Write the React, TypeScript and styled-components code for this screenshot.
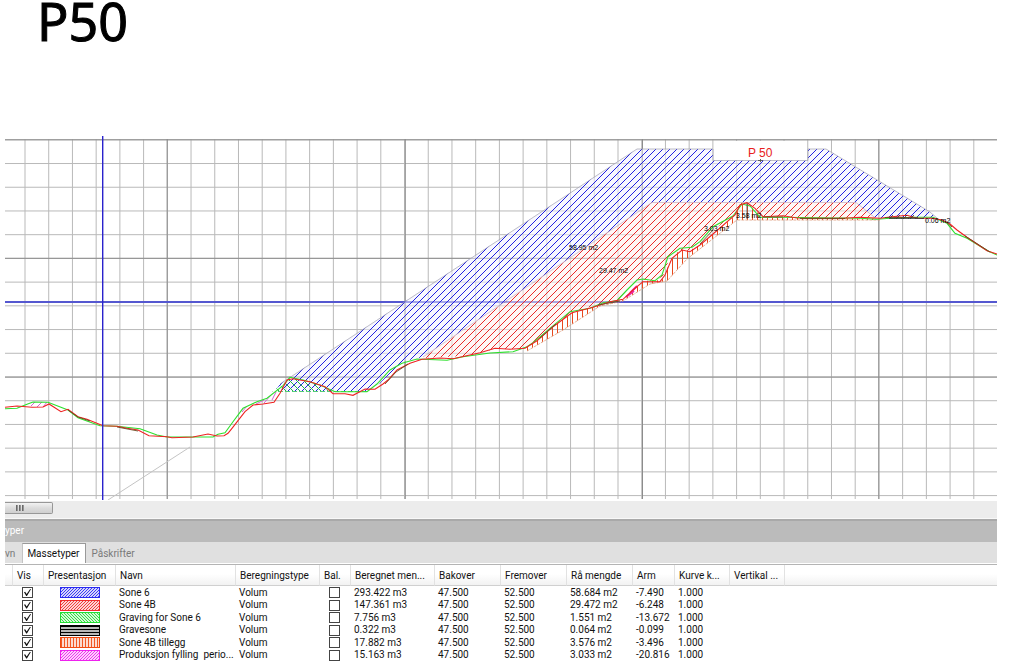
import React from "react";
import styled, { createGlobalStyle, css } from "styled-components";

const GlobalStyle = createGlobalStyle`
  *, *::before, *::after { box-sizing: border-box; }
  body {
    margin: 0;
    background: #fff;
    color: #111;
    font-family: Roboto, "Noto Sans", sans-serif;
    font-size: 10px;
  }
`;

const Page = styled.main`
  display: flex;
  flex-direction: column;
  padding: 0 27px 8px 5px;
`;

const Title = styled.h1`
  margin: 0;
  height: 136px;
  padding-left: 32px;
  font-family: "Noto Sans", "Open Sans", sans-serif;
  font-size: 52px;
  font-weight: 400;
  line-height: 42px;
  color: #000;
  -webkit-text-stroke: 1px #000;
`;

const Section = styled.svg`
  display: block;
  width: 100%;
  height: auto;
`;

const ScrollTrack = styled.div`
  display: flex;
  height: 18px;
  padding: 1px 0 4px;
  margin-top: 1px;
  background: #ececec;
  border-bottom: 1px solid #f8f8f8;
`;

const ScrollThumb = styled.button`
  display: flex;
  align-items: center;
  justify-content: center;
  gap: 1px;
  width: 48px;
  height: 12px;
  padding: 0 18px 0 0;
  border: 1px solid #979797;
  border-left: 0;
  border-radius: 0 2px 2px 0;
  background: linear-gradient(#f2f2f2, #dcdcdc 50%, #cfcfcf);
`;

const Grip = styled.span`
  width: 2px;
  height: 6px;
  background: linear-gradient(90deg, #555, #aaa);
`;

const PanelHeading = styled.h2`
  margin: 0;
  height: 23px;
  border-top: 2px solid #a9a9a9;
  background: #bbb;
  color: #fff;
  font-size: 10px;
  font-weight: 400;
  line-height: 20px;
`;

const TabStrip = styled.div`
  display: flex;
  align-items: stretch;
  height: 22px;
  padding-top: 1px;
  background: #e0e0e0;
  border-bottom: 1px solid #fff;
`;

const Tab = styled.button<{ $active?: boolean; $cut?: boolean }>`
  padding: 0 ${(p) => (p.$cut ? 7 : 5)}px 0 ${(p) => (p.$cut ? 0 : 5)}px;
  border: 0;
  background: transparent;
  color: #7a7a7a;
  font: inherit;
  line-height: 19px;
  ${(p) =>
    p.$active &&
    css`
      padding: 0 6px 0 4px;
      border: 1px solid #999;
      border-bottom: 0;
      border-left-color: #c4c4c4;
      background: #fff;
      color: #111;
    `}
`;

const Table = styled.table`
  width: 100%;
  table-layout: fixed;
  border-collapse: separate;
  border-spacing: 0;
  border-top: 1px solid #b4b4b4;
`;

const HeadCell = styled.th<{ $pad: number }>`
  height: 21px;
  padding: 1px 0 0 ${(p) => p.$pad}px;
  border-right: 1px solid #e2e2e2;
  border-bottom: 1px solid #d0d0d0;
  background: linear-gradient(#fff, #fff 45%, #f2f2f2);
  font-weight: 400;
  text-align: left;
  white-space: nowrap;
  overflow: hidden;
  line-height: 18px;
  &:last-child { border-right: 0; }
`;

const Row = styled.tr`
  height: 13px;
  &:nth-child(even) { height: 12px; }
`;

const Cell = styled.td<{ $pad: number }>`
  height: inherit;
  padding: 0 0 0 ${(p) => p.$pad}px;
  line-height: 12px;
  vertical-align: middle;
  white-space: pre;
  overflow: hidden;
`;

const Check = styled.input`
  appearance: none;
  display: grid;
  place-items: center;
  width: 11px;
  height: 11px;
  margin: 0;
  border: 1px solid #444;
  background: #fff;
  &:checked::before {
    content: "";
    width: 7px;
    height: 7px;
    background: #111;
    clip-path: polygon(0 45%, 16% 40%, 38% 72%, 88% 0, 100% 5%, 42% 100%, 32% 100%);
  }
`;

const Swatch = styled.svg`
  display: block;
  width: 40px;
  height: 11px;
`;

type Hatch = "up" | "down" | "rows" | "bars";

interface MassType {
  id: string;
  color: string;
  hatch: Hatch;
  name: string;
  volume: string;
  area: string;
  arm: string;
}

const massTypes: MassType[] = [
  { id: "s6", color: "#2a2af0", hatch: "up", name: "Sone 6", volume: "293.422 m3", area: "58.684 m2", arm: "-7.490" },
  { id: "s4b", color: "#f02a2a", hatch: "up", name: "Sone 4B", volume: "147.361 m3", area: "29.472 m2", arm: "-6.248" },
  { id: "g6", color: "#22dd33", hatch: "down", name: "Graving for Sone 6", volume: "7.756 m3", area: "1.551 m2", arm: "-13.672" },
  { id: "gs", color: "#000000", hatch: "rows", name: "Gravesone", volume: "0.322 m3", area: "0.064 m2", arm: "-0.099" },
  { id: "s4t", color: "#f04a10", hatch: "bars", name: "Sone 4B tillegg", volume: "17.882 m3", area: "3.576 m2", arm: "-3.496" },
  { id: "pf", color: "#ee22ee", hatch: "up", name: "Produksjon fylling  perio...", volume: "15.163 m3", area: "3.033 m2", arm: "-20.816" },
];

const columns = [
  { label: "", width: 8, pad: 0 },
  { label: "Vis", width: 31, pad: 4 },
  { label: "Presentasjon", width: 72, pad: 4 },
  { label: "Navn", width: 120, pad: 4 },
  { label: "Beregningstype", width: 84, pad: 4 },
  { label: "Bal.", width: 31, pad: 4 },
  { label: "Beregnet men...", width: 84, pad: 4 },
  { label: "Bakover", width: 66, pad: 4 },
  { label: "Fremover", width: 66, pad: 4 },
  { label: "Rå mengde", width: 66, pad: 4 },
  { label: "Arm", width: 42, pad: 4 },
  { label: "Kurve k...", width: 55, pad: 4 },
  { label: "Vertikal ...", width: 55, pad: 4 },
];

const hatchLines: Record<Hatch, string> = {
  up: "M-1 4L4 -1M-1 1L1 -1M2 4L4 2",
  down: "M-1 -1L4 4M2 -1L4 1M-1 2L1 4",
  rows: "M0 1.5H3",
  bars: "M1.5 0V3",
};

function HatchSwatch({ id, color, hatch }: { id: string; color: string; hatch: Hatch }) {
  return (
    <Swatch viewBox="0 0 40 11" aria-hidden="true">
      <defs>
        <pattern id={`swatch-${id}`} width="3" height="3" patternUnits="userSpaceOnUse">
          <path d={hatchLines[hatch]} stroke={color} strokeWidth={hatch === "rows" ? 1.2 : 0.9} />
        </pattern>
      </defs>
      <rect width="40" height="11" fill={color} opacity="0.2" />
      <rect x="0.5" y="0.5" width="39" height="10" fill={`url(#swatch-${id})`} stroke={color} />
    </Swatch>
  );
}

const minorX = Array.from({ length: 41 }, (_, i) => 25 + i * 23.72);
const minorY = Array.from({ length: 16 }, (_, i) => 139.8 + i * 23.72);
const majorX = [167.2, 405.3, 642.5, 878.8];
const majorY = [139.8, 258.3, 377.1];

const surveyed =
  "5,407.3 17,406 32,407.3 43,407 49,404 61,411.7 68,409.3 78,416.7 87,419.3 103,425.7 117,426.3 127,428.3 138,430 149,435.7 167,436.7 172,437.7 193,437 208,434 217,436 224,435.7 228,433.3 232,428.3 238,420.7 245,411.7 253,405 263,404 274,402.3 280,393.3 287,380 293,378.7 310,381.7 325,386.7 333,393.7 345,393.7 353,395.3 365,389 375,389.3 383,384 388,380 397,370 410,363.3 422,359.3 440,358 453,358.7 480,352.7 495,348.3 510,349.3 525,348.3 537,340.7 553,326.7 572,312.7 593,307.3 610,301.7 623,299.3 633,290 643,281.7 660,281.7 665,275 672,258.3 682,250 690,251.7 700,245 713,234 735,215 740,205 747,202.7 755,208.3 763,216.7 783,215.7 797,218 843,218.3 860,217.3 880,218.3 892,216.7 907,215.3 917,218.3 933,218.3 942,220 950,224 957,230 967,237.3 977,244 987,250.7 997,254";
const terrain =
  "5,408.7 17,408.3 27,404.3 33,402 48,402.3 68,410 78,417.7 100,425.7 117,426.3 140,428.7 157,435 167,437 213,437 218,434.3 225,432.7 233,421.7 243,408.3 257,401.7 267,398.3 283,385.7 290,377.3 303,380 320,385 335,391.7 367,391.7 377,384 390,370 402,363.3 417,359 447,360.3 463,356.7 490,353 513,351.7 527,346.7 533,342.7 550,328.3 570,311.7 590,308.3 603,302.7 617,300.7 627,290 637,280 643,279 655,280.7 662,275 668,256.7 680,248.3 692,247.3 700,241.7 713,226.7 733,216 742,204 750,206 760,217.3 780,217.3 860,218.3 877,219.3 890,218.3 913,217.3 933,217.3 947,223.3 955,233.3 967,238.3 988,251 997,255";

const fillArea =
  "280,384 637,149 713,149 713,160.5 808,160.5 808,149 826,149 930,212 938,219 876,218.5 856,202.5 652,202.5 423,357 405,361 393,371 380,383 368,391.5 275,391.5";
const coreArea =
  "652,202.5 856,202.5 876,218.5 765,217.5 756,208 746,203 738,213 713,230 700,243 690,251 680,250 670,257 663,276 655,281 643,280 633,284 620,299 603,303 572,312 550,329 533,342 520,349 495,349 465,356 423,358";
const supplementArea =
  "527,351 563,330 600,306 623,301 650,284 667,281 687,259 737,220 876,220 876,218.5 763,217.5 747,203 740,206 735,216 700,245 688,251 680,249 670,262 662,280 643,281 623,300 593,307 572,313 553,327 537,341 525,348";

const labels = [
  { x: 569, y: 250, text: "58.95 m2" },
  { x: 599, y: 273, text: "29.47 m2" },
  { x: 704, y: 231, text: "3.03 m2" },
  { x: 736, y: 218, text: "3.58 m2" },
  { x: 925, y: 223, text: "0.06 m2" },
];

function CrossSection() {
  return (
    <Section viewBox="5 136 992 364" role="img" aria-label="P 50">
      <defs>
        <pattern id="fill-hatch" width="7" height="7" patternUnits="userSpaceOnUse">
          <path d="M-1 8L8 -1M-1 1L1 -1M6 8L8 6" stroke="#2222e0" shapeRendering="crispEdges" />
        </pattern>
        <pattern id="core-hatch" width="7" height="7" patternUnits="userSpaceOnUse">
          <path d="M-1 8L8 -1M-1 1L1 -1M6 8L8 6" stroke="#e82a2a" shapeRendering="crispEdges" />
        </pattern>
        <pattern id="cut-hatch" width="7" height="7" patternUnits="userSpaceOnUse">
          <path d="M-1 -1L8 8M6 -1L8 1M-1 6L1 8" stroke="#22bb44" />
        </pattern>
        <pattern id="bar-hatch" width="5" height="5" patternUnits="userSpaceOnUse">
          <path d="M2.5 0V5" stroke="#e8481c" />
        </pattern>
      </defs>
      {minorX.map((x) => (
        <path key={x} d={`M${x} 139V499`} stroke="#b9b9b9" />
      ))}
      {minorY.map((y) => (
        <path key={y} d={`M5 ${y}H997`} stroke="#b9b9b9" />
      ))}
      {majorX.map((x) => (
        <path key={x} d={`M${x} 139V499`} stroke="#8c8c8c" />
      ))}
      {majorY.map((y) => (
        <path key={y} d={`M5 ${y}H997`} stroke="#8c8c8c" />
      ))}
      <path d="M5 302H997" stroke="#5558d0" strokeWidth="2" />
      <path d="M108 500L190 447" stroke="#c4c4c4" />
      <rect x="714" y="141" width="93" height="19" fill="#fff" />
      <polygon points={fillArea} fill="#f1f1ff" fillOpacity="0.5" />
      <polygon points={fillArea} fill="url(#fill-hatch)" />
      <polygon points={coreArea} fill="#fff0ee" fillOpacity="0.5" />
      <polygon points={coreArea} fill="url(#core-hatch)" />
      <polyline
        points="280,384 637,149 713,149 713,160.5 808,160.5 808,149 826,149 930,212 938,219"
        fill="none"
        stroke="#a0a0b0"
        strokeWidth="0.7"
      />
      <polyline points="423,357 652,202.5 856,202.5 876,218.5" fill="none" stroke="#c9a8b4" strokeWidth="0.7" />
      <polygon points="272,391.5 283,384 290,378 303,380 320,386 330,391.5" fill="url(#cut-hatch)" />
      <path d="M278 391.5H368" stroke="#55cc77" strokeDasharray="5 2" />
      <polygon points={supplementArea} fill="url(#bar-hatch)" />
      <polyline
        points="527,351 563,330 600,306 623,301 650,284 667,281 687,259 737,220 880,220"
        fill="none"
        stroke="#dd9a78"
        strokeWidth="0.8"
        strokeDasharray="3 1"
      />
      <path
        d="M31 406L35 402M37 407L42 402M43 407L47 402M242 412L247 406M256 404L264 400M264 403L271 395M272 400L276 392"
        stroke="#d050d0"
        strokeWidth="0.9"
      />
      <path d="M626 297L634 291M630 293L637 286" stroke="#ee22aa" strokeWidth="2" />
      <polyline points={terrain} fill="none" stroke="#2ee02e" strokeWidth="1.1" />
      <polyline points={surveyed} fill="none" stroke="#ee2222" strokeWidth="1.1" />
      <path
        d="M68 410L78 417L90 421M117 427L138 431M385 384L396 372L408 364M540 338L556 324M598 305L620 301M700 244L713 230M763 217H783M800 218.5H845M885 217.5H918M945 221L952 227M965 236L990 252"
        fill="none"
        stroke="#6a4a20"
        strokeWidth="0.9"
      />
      <path d="M889 219L893 215M896 219L900 215M903 219L907 215M910 219L914 215M890 218.5H924" stroke="#333" strokeWidth="0.8" />
      <path d="M102.7 136V500" stroke="#2a22cc" strokeWidth="1.4" />
      <path d="M747 203V219M758 160.5H763M760.5 159V162" stroke="#555" strokeWidth="0.9" />
      {labels.map((l) => (
        <text key={l.text} x={l.x} y={l.y} fill="#000" fontFamily="Liberation Sans Narrow, Liberation Sans, sans-serif" fontSize="7">
          {l.text}
        </text>
      ))}
      <text x="748" y="157" fill="#e82020" fontFamily="Liberation Sans, sans-serif" fontSize="12">
        P 50
      </text>
    </Section>
  );
}

export default function App() {
  return (
    <>
      <GlobalStyle />
      <Page>
        <Title>P50</Title>
        <CrossSection />
        <ScrollTrack>
          <ScrollThumb type="button" aria-label="Rull">
            <Grip />
            <Grip />
            <Grip />
          </ScrollThumb>
        </ScrollTrack>
        <PanelHeading>yper</PanelHeading>
        <TabStrip role="tablist">
          <Tab type="button" role="tab" $cut>vn</Tab>
          <Tab type="button" role="tab" aria-selected="true" $active>Massetyper</Tab>
          <Tab type="button" role="tab">Påskrifter</Tab>
        </TabStrip>
        <Table>
          <colgroup>
            {columns.map((c) => (
              <col key={c.label} width={c.width} />
            ))}
            <col />
          </colgroup>
          <thead>
            <tr>
              {columns.map((c) => (
                <HeadCell key={c.label} $pad={c.pad}>{c.label}</HeadCell>
              ))}
              <HeadCell $pad={0} />
            </tr>
          </thead>
          <tbody>
            {massTypes.map((m) => (
              <Row key={m.id}>
                <Cell $pad={0} />
                <Cell $pad={9}><Check type="checkbox" defaultChecked aria-label={`Vis ${m.name}`} /></Cell>
                <Cell $pad={16}><HatchSwatch id={m.id} color={m.color} hatch={m.hatch} /></Cell>
                <Cell $pad={3}>{m.name}</Cell>
                <Cell $pad={3}>Volum</Cell>
                <Cell $pad={9}><Check type="checkbox" aria-label={`Bal. ${m.name}`} /></Cell>
                <Cell $pad={3}>{m.volume}</Cell>
                <Cell $pad={3}>47.500</Cell>
                <Cell $pad={3}>52.500</Cell>
                <Cell $pad={3}>{m.area}</Cell>
                <Cell $pad={3}>{m.arm}</Cell>
                <Cell $pad={3}>1.000</Cell>
                <Cell $pad={3} />
                <Cell $pad={0} />
              </Row>
            ))}
          </tbody>
        </Table>
      </Page>
    </>
  );
}
